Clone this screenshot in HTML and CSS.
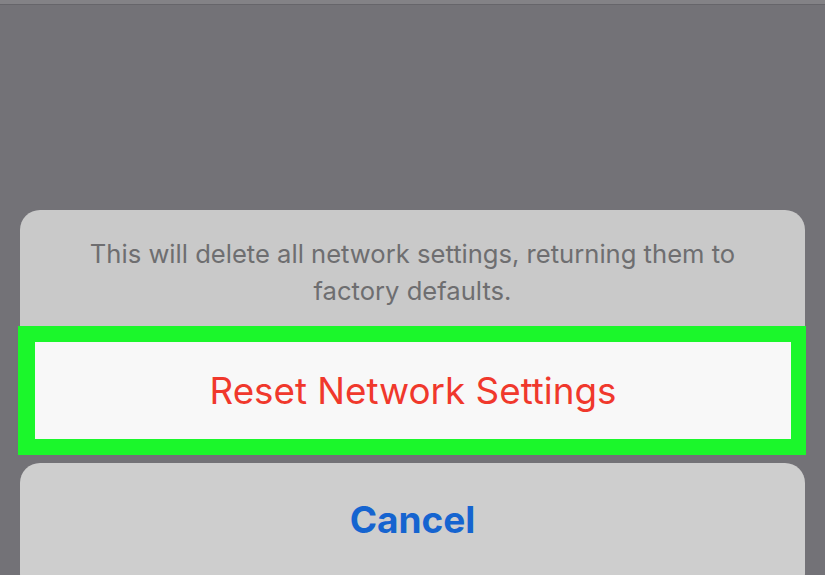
FILE: index.html
```html
<!DOCTYPE html>
<html>
<head>
<meta charset="utf-8">
<link rel="stylesheet" href="styles.css">
</head>
<body>
<div class="topbar"></div>
<div class="screen">
  <div class="sheet">
    <p class="message">This will delete all network settings, returning them to factory defaults.</p>
  </div>
  <div class="highlight">
    <div class="action">Reset Network Settings</div>
  </div>
  <div class="cancel">Cancel</div>
</div>
</body>
</html>
```
FILE: styles.css
```css
html, body {
  margin: 0;
  padding: 0;
  width: 825px;
  height: 575px;
  overflow: hidden;
  background: #737277;
  font-family: "Inter", "Liberation Sans", sans-serif;
}
.topbar {
  height: 4px;
  background: #838286;
  border-bottom: 1px solid #66656a;
}
.screen {
  padding: 205px 20px 0 20px;
  display: flex;
  flex-direction: column;
}
.sheet {
  background: #c9c9c9;
  border-radius: 20px 20px 0 0;
  height: 116px;
  box-sizing: border-box;
  padding: 25px 50px 0 50px;
}
.message {
  margin: 0;
  text-align: center;
  font-size: 25.6px;
  line-height: 37px;
  color: #6e6e70;
}
.highlight {
  margin: 0 -1px 0 -2px;
  background: #1bf72b;
  padding: 16px 15px 16px 17px;
}
.action {
  background: #f8f8f8;
  height: 97px;
  display: flex;
  align-items: center;
  justify-content: center;
  color: #f0382c;
  font-size: 36.8px;
}
.cancel {
  margin-top: 8px;
  background: #cecece;
  border-radius: 20px;
  height: 130px;
  box-sizing: border-box;
  padding-top: 34px;
  text-align: center;
  color: #1564d0;
  font-weight: 700;
  font-size: 37px;
}
```
